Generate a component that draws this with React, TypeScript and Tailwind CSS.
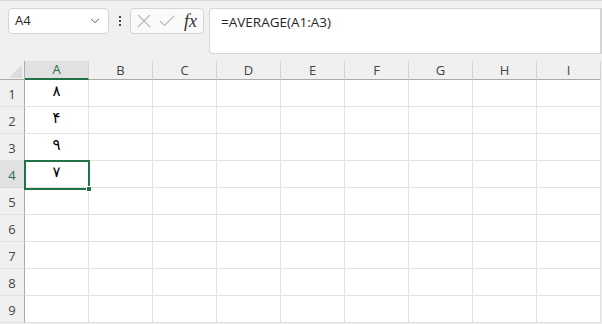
import { ChevronDown } from "lucide-react";

const cols = ["A", "B", "C", "D", "E", "F", "G", "H", "I"];
const values: Record<number, string> = { 1: "۸", 2: "۴", 3: "۹", 4: "۷" };
const rows = [1, 2, 3, 4, 5, 6, 7, 8, 9];

export default function App() {
  return (
    <div className="relative h-[324px] w-[602px] overflow-hidden border-t border-[#dadada] bg-[#f0f0f0] font-['Open_Sans','Noto_Sans',sans-serif] text-[#262626]">
      {/* formula bar */}
      <div className="flex h-[60px] items-start pl-2 pt-[7px]">
        <div className="flex h-[26px] w-[101px] items-center justify-between rounded-[4px] border border-[#d4d4d4] bg-white pl-[6px] pr-[6px] text-[13px]">
          <span>A4</span>
          <ChevronDown size={14} strokeWidth={1.5} className="text-[#444]" />
        </div>
        <div className="flex h-[26px] w-[21px] flex-col items-center justify-center gap-[2px]">
          <span className="h-[2px] w-[2px] bg-[#444]" />
          <span className="h-[2px] w-[2px] bg-[#444]" />
          <span className="h-[2px] w-[2px] bg-[#444]" />
        </div>
        <div className="flex h-[26px] w-[74px] items-center rounded-[4px] border border-[#d4d4d4] bg-[#fafafa] pl-[6px]">
          <svg width="14" height="14" viewBox="0 0 14 14" className="text-[#b8b8b8]">
            <path d="M1 1 L13 13 M13 1 L1 13" stroke="currentColor" strokeWidth="1.1" fill="none" />
          </svg>
          <svg width="16" height="12" viewBox="0 0 16 12" className="ml-[8px] text-[#b8b8b8]">
            <path d="M1 6 L5.5 10.5 L15 1" stroke="currentColor" strokeWidth="1.1" fill="none" />
          </svg>
          <span className="ml-[9px] font-['Liberation_Serif',serif] text-[18px] italic leading-none text-[#333]">fx</span>
        </div>
        <div className="ml-[5px] h-[46px] flex-1 rounded-l-[4px] border border-r-2 border-[#d4d4d4] bg-white pl-[11px] pt-[3px] text-[13.5px]">
          =AVERAGE(A1:A3)
        </div>
      </div>

      {/* sheet grid */}
      <div className="grid grid-cols-[25px_repeat(9,64px)] text-[13px]">
        <div className="relative h-[19px] border-b border-r border-[#ababab] bg-[#f0f0f0]">
          <svg width="13" height="13" viewBox="0 0 13 13" className="absolute left-[9px] top-[4px]">
            <path d="M13 0 L13 13 L0 13 Z" fill="#dcdcdc" />
          </svg>
        </div>
        {cols.map((c) =>
          c === "A" ? (
            <div
              key={c}
              className="flex h-[19px] items-center justify-center border-b-2 border-r border-b-[#217346] border-r-[#d5d5d5] bg-[#e1e1e1] pt-px text-[#217346]"
            >
              {c}
            </div>
          ) : (
            <div
              key={c}
              className="flex h-[19px] items-center justify-center border-b border-r border-b-[#ababab] border-r-[#d5d5d5] pt-px text-[#444]"
            >
              {c}
            </div>
          )
        )}
        {rows.map((r) => (
          <Row key={r} r={r} />
        ))}
      </div>

      {/* selection A4 */}
      <div className="pointer-events-none absolute left-[24px] top-[159px] h-[30px] w-[66px] border-2 border-[#217346]">
        <span className="absolute -bottom-[4px] -right-[4px] h-[6px] w-[6px] border border-white bg-[#217346]" />
      </div>
    </div>
  );
}

function Row({ r }: { r: number }) {
  const sel = r === 4;
  return (
    <>
      <div
        className={
          sel
            ? "flex h-[27px] items-end justify-center border-b border-r border-b-[#d5d5d5] border-r-[#ababab] bg-[#e1e1e1] pb-[2px] text-[#217346]"
            : "flex h-[27px] items-end justify-center border-b border-r border-b-[#e3e3e3] border-r-[#ababab] bg-[#f0f0f0] pb-[2px] text-[#444]"
        }
      >
        {r}
      </div>
      {cols.map((c) => (
        <div
          key={c}
          className="flex h-[27px] items-center justify-center border-b border-r border-[#e1e1e1] bg-white pb-[3px] font-['DejaVu_Sans',sans-serif] text-[15px] text-black"
        >
          {c === "A" ? values[r] ?? "" : ""}
        </div>
      ))}
    </>
  );
}
